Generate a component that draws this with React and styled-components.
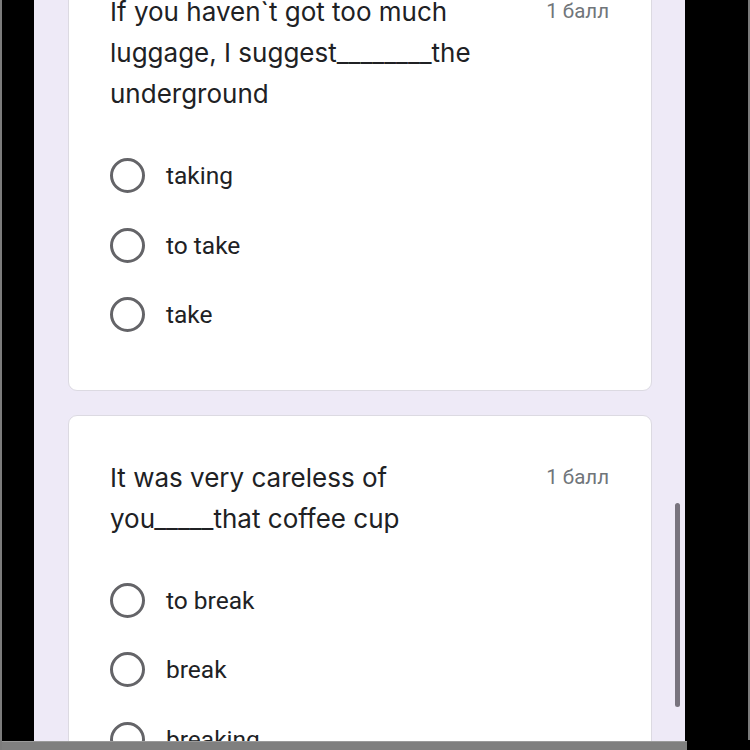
import styled, { createGlobalStyle } from "styled-components";

const GlobalStyle = createGlobalStyle`
  html, body {
    margin: 0;
    padding: 0;
    background: #000;
    overflow: hidden;
  }
  body {
    font-family: Roboto, "Liberation Sans", sans-serif;
  }
`;

const Screen = styled.div`
  width: 750px;
  height: 750px;
  display: flex;
  background: #000;
  overflow: hidden;
  position: relative;
  border-left: 2px solid #7c7c7c;
  box-sizing: border-box;
`;

const SideBlack = styled.div`
  width: ${(p) => p.w}px;
  flex-shrink: 0;
  background: #000;
`;

const Page = styled.div`
  width: 651px;
  flex-shrink: 0;
  background: #eeeaf7;
  padding: 0 33px 0 34px;
  box-sizing: border-box;
  display: flex;
  flex-direction: column;
  gap: 24px;
  position: relative;
`;

const Card = styled.div`
  background: #fff;
  border: 1px solid #dcdae2;
  border-radius: 9px;
  padding: 41px 42px 40px 41px;
  flex-shrink: 0;

  &:first-child {
    margin-top: -51px;
  }
`;

const Header = styled.div`
  display: flex;
  justify-content: space-between;
  align-items: flex-start;
  gap: 24px;
`;

const Question = styled.div`
  max-width: 400px;
  font-family: Inter, Roboto, sans-serif;
  font-size: 26px;
  line-height: 41px;
  color: #202124;
`;

const Points = styled.div`
  font-size: 20.5px;
  line-height: 41px;
  color: #70757a;
  white-space: nowrap;
`;

const Options = styled.div`
  margin-top: 27px;
  display: flex;
  flex-direction: column;
`;

const Option = styled.label`
  height: 69.5px;
  display: flex;
  align-items: center;
  gap: 21px;
  font-size: 24.5px;
  color: #202124;
`;

const Radio = styled.span`
  width: 35px;
  height: 35px;
  box-sizing: border-box;
  border: 3px solid #646468;
  border-radius: 50%;
  flex-shrink: 0;
`;

const Scrollbar = styled.div`
  position: absolute;
  left: 641px;
  top: 503px;
  width: 5px;
  height: 204px;
  border-radius: 3px;
  background: #78747e;
`;

const NavBar = styled.div`
  position: absolute;
  left: 0;
  right: 63px;
  bottom: 0;
  height: 8px;
  background: #7f7f7f;
  border-top: 1px solid #9a9a9a;
`;

const RightEdge = styled.div`
  position: absolute;
  right: 0;
  top: 0;
  bottom: 10px;
  width: 2px;
  background: #7c7c7c;
`;

const questions = [
  {
    text: "If you haven`t got too much luggage, I suggest________the underground",
    options: ["taking", "to take", "take"],
  },
  {
    text: "It was very careless of you_____that coffee cup",
    options: ["to break", "break", "breaking"],
  },
];

export default function App() {
  return (
    <>
      <GlobalStyle />
      <Screen>
        <SideBlack w={32} />
        <Page>
          {questions.map((q) => (
            <Card key={q.text}>
              <Header>
                <Question>{q.text}</Question>
                <Points>1 балл</Points>
              </Header>
              <Options>
                {q.options.map((o) => (
                  <Option key={o}>
                    <Radio />
                    {o}
                  </Option>
                ))}
              </Options>
            </Card>
          ))}
          <Scrollbar />
        </Page>
        <SideBlack w={65} />
        <NavBar />
        <RightEdge />
      </Screen>
    </>
  );
}
